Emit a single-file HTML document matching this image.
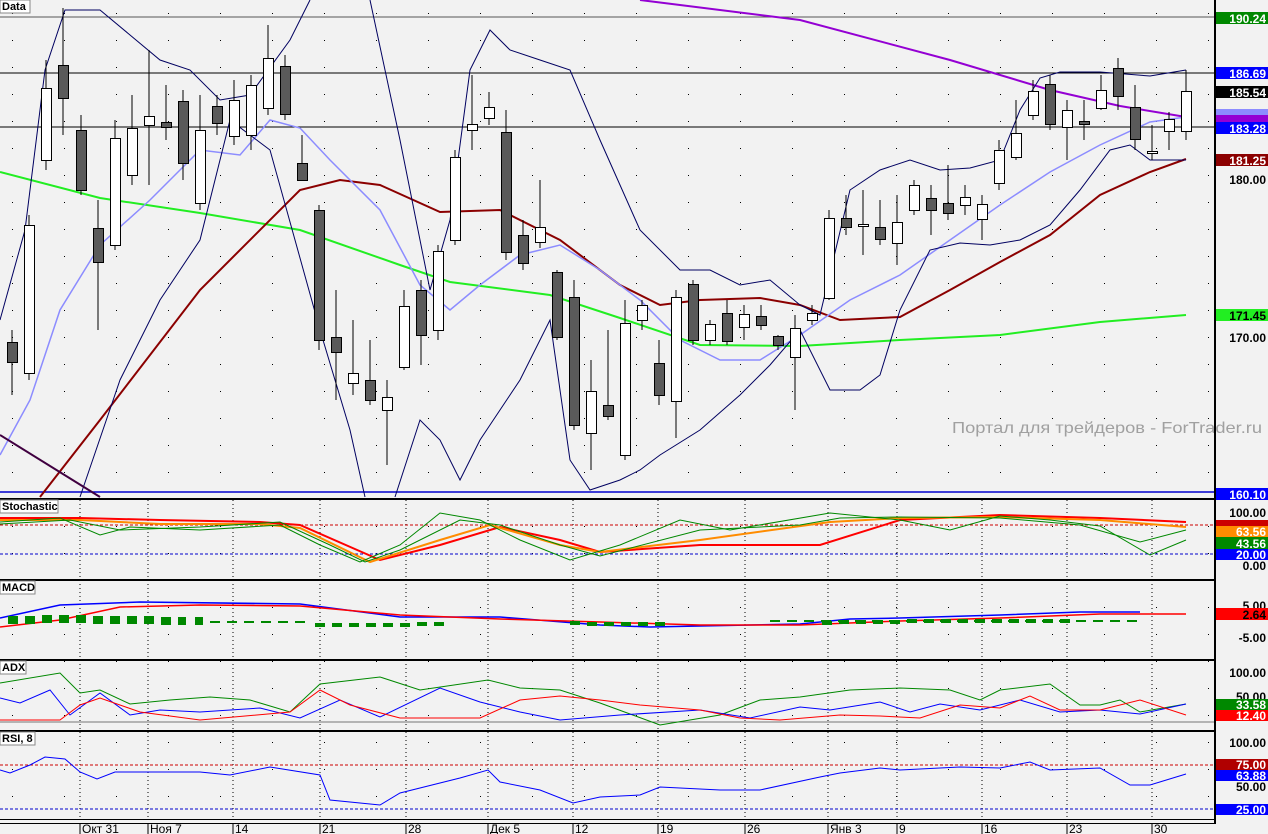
<!DOCTYPE html><html><head><meta charset="utf-8"><style>
body{margin:0;background:#f2f2f2;}
svg{display:block;font-family:"Liberation Sans",sans-serif;}
.ax{font:bold 12px "Liberation Sans",sans-serif;}
.pl{font:bold 11px "Liberation Sans",sans-serif;}
</style></head><body>
<svg width="1268" height="834" viewBox="0 0 1268 834" xmlns="http://www.w3.org/2000/svg">
<defs>
<pattern id="dots" x="12" y="0" width="52" height="27" patternUnits="userSpaceOnUse"><rect x="0" y="13" width="1" height="1" fill="#000"/></pattern>
</defs>
<rect width="1268" height="834" fill="#f2f2f2"/>
<rect x="0" y="0" width="1215" height="820" fill="url(#dots)"/>
<g stroke="#000" stroke-dasharray="1,3" stroke-width="1">
<path d="M80 500V820M148 500V820M233 500V820M320 500V820M406 500V820M488 500V820M573 500V820M658 500V820M745 500V820M828 500V820M897 500V820M982 500V820M1067 500V820M1152 500V820"/>
</g>
<path d="M0 17H1215" stroke="#555" stroke-width="1"/>
<path d="M0 73H1215M0 127H1215" stroke="#000" stroke-width="1"/>
<path d="M0 492H1215" stroke="#00c" stroke-width="1.5"/>
<g fill="none" stroke-width="2">
<polyline stroke="#22ee22" points="0,172 100,198 200,213 300,230 400,265 450,282 550,295 620,318 700,345 800,346 900,340 1000,335 1100,322 1186,315"/>
<polyline stroke="#9400d3" points="640,0 800,20 950,60 1050,90 1120,106 1186,117"/>
<polyline stroke="#8b0000" points="40,497 100,420 200,290 300,190 340,180 380,185 440,212 500,210 560,240 620,285 660,305 700,300 760,298 800,305 840,320 900,317 950,290 1000,262 1050,235 1100,195 1150,172 1186,159"/>
<polyline stroke="#8c8cff" stroke-width="1.5" points="0,455 30,400 60,310 100,245 150,200 200,150 240,155 270,120 300,128 330,160 380,210 420,285 450,310 480,285 520,255 560,245 600,270 640,300 680,340 720,360 760,360 800,335 850,300 900,275 950,240 1000,205 1050,172 1100,145 1150,122 1186,117"/>
</g>
<g fill="none" stroke="#000060" stroke-width="1">
<polyline points="0,320 25,230 45,70 65,10 100,10 130,35 160,60 190,70 220,100 250,95 290,40 310,0"/>
<polyline points="370,0 400,140 430,290 450,220 470,70 490,30 510,50 540,60 570,70 600,140 640,230 680,270 710,270 740,285 770,280 800,305 820,315 850,190 880,170 910,160 940,170 970,168 1000,160 1020,110 1040,78 1060,72 1100,72 1150,76 1186,70"/>
<polyline points="80,497 120,380 160,300 200,240 230,120 270,150 320,330 350,430 365,497"/>
<polyline points="395,497 420,420 440,440 460,480 480,440 520,380 550,320 570,460 590,490 620,480 640,470 660,455 700,430 740,395 770,365 800,330 830,390 860,390 880,375 900,310 930,250 960,243 990,245 1020,240 1050,225 1080,190 1110,150 1130,145 1150,160 1186,160"/>
</g>
<path d="M0 435L100 497" stroke="#400040" stroke-width="2"/>
<text x="952" y="433" font-size="16" fill="#a0a0a0" textLength="310" lengthAdjust="spacingAndGlyphs">Портал для трейдеров - ForTrader.ru</text>
<g fill="none" stroke-width="1">
<path d="M0 525H1215" stroke="#c00" stroke-dasharray="3,2"/>
<path d="M0 554H1215" stroke="#00c" stroke-dasharray="3,2"/>
<polyline stroke="#f00" stroke-width="2" points="0,518 80,518 160,520 260,522 300,525 380,560 440,545 500,527 560,540 600,552 700,545 820,545 900,520 1000,515 1100,518 1186,522"/>
<polyline stroke="#ff8c00" stroke-width="2" points="0,520 80,520 160,524 260,524 300,528 370,562 440,540 490,525 560,545 600,552 700,540 830,522 900,518 1000,517 1100,520 1186,527"/>
<polyline stroke="#080" points="0,522 60,518 100,535 130,527 200,530 280,525 320,545 360,562 400,545 440,513 480,520 520,540 570,560 620,545 680,520 730,530 830,513 900,520 950,530 1000,516 1050,520 1100,526 1150,555 1186,540"/>
<polyline stroke="#080" points="0,524 70,520 120,530 200,527 280,522 330,545 365,562 400,550 460,520 500,525 560,545 600,556 700,530 800,525 840,518 900,517 1000,518 1080,525 1140,542 1186,530"/>
<polyline stroke="#00f" stroke-width="1.5" points="0,618 60,605 140,602 300,604 400,617 500,617 600,625 650,627 700,626 800,624 850,619 900,618 1000,615 1080,612 1140,612"/>
<polyline stroke="#f00" stroke-width="1.5" points="0,627 60,620 120,607 200,605 300,606 400,615 500,619 600,622 700,625 800,625 900,621 1000,618 1100,614 1186,614"/>
<path d="M8 620h10M25 620h10M42 619h10M59 619h10M76 619h10M93 620h10M110 620h10M127 620h10M144 620h10M161 621h10M178 621h8M195 621h8" stroke="#080" stroke-width="8"/>
<path d="M210 622H310M770 621H1140" stroke="#080" stroke-width="2" stroke-dasharray="10,7"/>
<path d="M315 625h10M332 625h10M349 625h10M366 625h10M383 625h10M400 625h10M417 624h10M434 624h10M570 623h10M587 624h10M604 624h10M621 624h10M638 624h10M655 624h10M822 623h10M839 622h10M856 622h10M873 622h10M890 622h10M907 621h10M924 621h10M941 621h10M958 621h10M975 621h10M992 621h10M1009 621h10M1026 621h10M1043 621h10M1060 621h10" stroke="#080" stroke-width="4"/>
<path d="M0 722H1215" stroke="#777"/>
<polyline stroke="#080" points="0,683 60,673 80,693 100,690 130,704 170,700 210,697 250,700 290,712 320,684 380,677 420,690 488,680 520,688 560,690 600,703 660,725 720,715 760,700 800,697 850,690 900,688 950,690 980,700 1000,690 1050,684 1080,705 1100,705 1120,700 1140,712 1186,704"/>
<polyline stroke="#00f" points="0,698 20,703 50,690 70,715 100,693 130,715 160,710 200,712 260,708 300,718 340,700 380,717 440,688 480,702 520,712 560,720 620,715 700,710 750,718 800,707 830,710 880,702 910,712 940,704 980,710 1020,700 1060,712 1100,710 1140,714 1186,704"/>
<polyline stroke="#f00" points="0,720 60,720 80,705 100,698 140,712 200,720 290,712 320,690 350,705 400,718 480,718 520,700 560,696 600,700 640,705 700,710 740,718 780,720 840,715 880,716 920,718 960,705 1000,708 1030,696 1060,710 1100,710 1140,700 1186,715"/>
<path d="M0 765H1215" stroke="#c00" stroke-dasharray="3,2"/>
<path d="M0 809H1215" stroke="#00c" stroke-dasharray="3,2"/>
<polyline stroke="#00f" points="0,770 10,773 30,765 45,757 65,759 80,772 97,779 115,772 200,772 230,775 270,767 320,775 330,800 380,805 400,793 460,778 488,770 500,782 540,790 573,803 600,797 640,795 660,787 720,790 760,790 820,777 840,773 880,768 900,770 960,767 1000,768 1030,762 1050,770 1100,768 1130,785 1150,785 1186,774"/>
</g>
<g fill="#000">
<rect x="0" y="498" width="1215" height="2"/>
<rect x="0" y="579" width="1215" height="2"/>
<rect x="0" y="659" width="1215" height="2"/>
<rect x="0" y="730" width="1215" height="2"/>
<rect x="0" y="819" width="1215" height="1"/>
<rect x="0" y="823" width="1215" height="1"/>
<rect x="1214" y="0" width="2" height="824"/>
</g>
<g class="pl">
<rect x="0" y="0" width="30" height="13" fill="#fff" stroke="#888"/><text x="2" y="10">Data</text>
<rect x="0" y="500" width="58" height="13" fill="#fff" stroke="#888"/><text x="2" y="510">Stochastic</text>
<rect x="0" y="581" width="35" height="13" fill="#fff" stroke="#888"/><text x="2" y="591">MACD</text>
<rect x="0" y="661" width="26" height="13" fill="#fff" stroke="#888"/><text x="2" y="671">ADX</text>
<rect x="0" y="732" width="35" height="13" fill="#fff" stroke="#888"/><text x="2" y="742">RSI, 8</text>
</g>
<g font-size="12" fill="#000">
<path d="M80 824V834M148 824V834M233 824V834M320 824V834M406 824V834M488 824V834M573 824V834M658 824V834M745 824V834M828 824V834M897 824V834M982 824V834M1067 824V834M1152 824V834" stroke="#000"/>
<text x="82" y="833">Окт 31</text><text x="150" y="833">Ноя 7</text><text x="235" y="833">14</text><text x="322" y="833">21</text><text x="408" y="833">28</text><text x="490" y="833">Дек 5</text><text x="575" y="833">12</text><text x="660" y="833">19</text><text x="747" y="833">26</text><text x="830" y="833">Янв 3</text><text x="899" y="833">9</text><text x="984" y="833">16</text><text x="1069" y="833">23</text><text x="1154" y="833">30</text>
</g>
<g class="ax" text-anchor="end">
<rect x="1216" y="12" width="52" height="12" fill="#080"/><text x="1266" y="23" fill="#fff">190.24</text>
<rect x="1216" y="67" width="52" height="12" fill="#00f"/><text x="1266" y="78" fill="#fff">186.69</text>
<rect x="1216" y="86" width="52" height="12" fill="#000"/><text x="1266" y="97" fill="#fff">185.54</text>
<rect x="1216" y="109" width="52" height="6" fill="#8c8cff"/>
<rect x="1216" y="115" width="52" height="7" fill="#9400d3"/>
<rect x="1216" y="122" width="52" height="12" fill="#00f"/><text x="1266" y="133" fill="#fff">183.28</text>
<rect x="1216" y="154" width="52" height="12" fill="#8b0000"/><text x="1266" y="165" fill="#fff">181.25</text>
<text x="1266" y="184">180.00</text>
<rect x="1216" y="309" width="52" height="12" fill="#22ee22"/><text x="1266" y="320" fill="#000">171.45</text>
<text x="1266" y="342">170.00</text>
<rect x="1216" y="488" width="52" height="12" fill="#00f"/><text x="1266" y="499" fill="#fff">160.10</text>
<text x="1266" y="517">100.00</text>
<rect x="1216" y="520" width="52" height="6" fill="#c00"/>
<rect x="1216" y="526" width="52" height="11" fill="#ff8c00"/><text x="1266" y="536" fill="#fff">63.56</text>
<rect x="1216" y="537" width="52" height="12" fill="#080"/><text x="1266" y="548" fill="#fff">43.56</text>
<rect x="1216" y="549" width="52" height="11" fill="#00f"/><text x="1266" y="559" fill="#fff">20.00</text>
<text x="1266" y="570">0.00</text>
<text x="1266" y="610">5.00</text>
<rect x="1216" y="608" width="52" height="12" fill="#f00"/><text x="1266" y="619" fill="#000">2.64</text>
<text x="1266" y="642">-5.00</text>
<text x="1266" y="677">100.00</text>
<text x="1266" y="701">50.00</text>
<rect x="1216" y="699" width="52" height="11" fill="#080"/><text x="1266" y="709" fill="#fff">33.58</text>
<rect x="1216" y="710" width="52" height="11" fill="#f00"/><text x="1266" y="720" fill="#fff">12.40</text>
<text x="1266" y="747">100.00</text>
<rect x="1216" y="759" width="52" height="11" fill="#b00000"/><text x="1266" y="769" fill="#fff">75.00</text>
<rect x="1216" y="770" width="52" height="11" fill="#00f"/><text x="1266" y="780" fill="#fff">63.88</text>
<text x="1266" y="791">50.00</text>
<rect x="1216" y="804" width="52" height="11" fill="#00f"/><text x="1266" y="814" fill="#fff">25.00</text>
</g>
<g stroke="#000" stroke-width="1">
<path d="M12 330V395M29 215V380M46 60V170M63 8V135M81 115V195M98 200V330M115 120V250M132 95V185M149 50V185M166 85V140M183 90V180M200 95V210M217 95V135M234 80V145M251 75V150M268 25V115M285 55V120M302 135V180M319 205V350M336 290V400M353 320V395M370 340V405M387 380V465M404 290V370M421 280V365M438 245V340M455 150V245M472 75V150M489 92V125M506 110V260M523 220V270M540 180V248M557 270V340M574 280V430M591 360V470M608 330V420M625 300V460M642 300V330M659 340V405M676 290V438M693 280V345M710 320V345M727 300V345M744 305V340M761 305V330M778 335V350M795 315V410M812 305V325M829 210V300M846 195V235M863 190V255M880 200V245M897 195V265M914 180V215M931 185V235M948 165V220M965 185V215M982 195V240M999 140V190M1016 100V160M1033 80V120M1050 75V130M1067 100V160M1084 100V140M1101 75V110M1118 58V110M1135 85V150M1152 125V160M1169 112V150M1186 70V140"/>
<g fill="#5a5a5a">
<rect x="7.5" y="342.5" width="10" height="20"/><rect x="58.5" y="65.5" width="10" height="33"/><rect x="76.5" y="130.5" width="10" height="60"/><rect x="93.5" y="228.5" width="10" height="34"/><rect x="161.5" y="122.5" width="10" height="5"/><rect x="178.5" y="101.5" width="10" height="62"/><rect x="212.5" y="106.5" width="10" height="17"/><rect x="280.5" y="66.5" width="10" height="48"/><rect x="297.5" y="163.5" width="10" height="17"/><rect x="314.5" y="210.5" width="10" height="130"/><rect x="331.5" y="337.5" width="10" height="15"/><rect x="365.5" y="380.5" width="10" height="20"/><rect x="416.5" y="290.5" width="10" height="45"/><rect x="501.5" y="132.5" width="10" height="120"/><rect x="518.5" y="235.5" width="10" height="28"/><rect x="552.5" y="272.5" width="10" height="65"/><rect x="569.5" y="297.5" width="10" height="128"/><rect x="603.5" y="405.5" width="10" height="11"/><rect x="654.5" y="363.5" width="10" height="32"/><rect x="688.5" y="284.5" width="10" height="56"/><rect x="722.5" y="313.5" width="10" height="28"/><rect x="756.5" y="316.5" width="10" height="9"/><rect x="773.5" y="336.5" width="10" height="9"/><rect x="841.5" y="218.5" width="10" height="9"/><rect x="875.5" y="227.5" width="10" height="12"/><rect x="926.5" y="198.5" width="10" height="12"/><rect x="943.5" y="203.5" width="10" height="10"/><rect x="1045.5" y="84.5" width="10" height="40"/><rect x="1079.5" y="121.5" width="10" height="3"/><rect x="1113.5" y="68.5" width="10" height="28"/><rect x="1130.5" y="107.5" width="10" height="32"/>
</g>
<g fill="#fff">
<rect x="24.5" y="225.5" width="10" height="148"/><rect x="41.5" y="88.5" width="10" height="72"/><rect x="110.5" y="138.5" width="10" height="107"/><rect x="127.5" y="128.5" width="10" height="47"/><rect x="144.5" y="116.5" width="10" height="9"/><rect x="195.5" y="130.5" width="10" height="73"/><rect x="229.5" y="100.5" width="10" height="36"/><rect x="246.5" y="85.5" width="10" height="50"/><rect x="263.5" y="58.5" width="10" height="50"/><rect x="348.5" y="373.5" width="10" height="10"/><rect x="382.5" y="397.5" width="10" height="13"/><rect x="399.5" y="306.5" width="10" height="61"/><rect x="433.5" y="251.5" width="10" height="79"/><rect x="450.5" y="157.5" width="10" height="83"/><rect x="467.5" y="124.5" width="10" height="6"/><rect x="484.5" y="107.5" width="10" height="11"/><rect x="535.5" y="227.5" width="10" height="15"/><rect x="586.5" y="391.5" width="10" height="42"/><rect x="620.5" y="323.5" width="10" height="132"/><rect x="637.5" y="305.5" width="10" height="15"/><rect x="671.5" y="297.5" width="10" height="104"/><rect x="705.5" y="324.5" width="10" height="16"/><rect x="739.5" y="314.5" width="10" height="13"/><rect x="790.5" y="328.5" width="10" height="29"/><rect x="807.5" y="313.5" width="10" height="7"/><rect x="824.5" y="218.5" width="10" height="80"/><rect x="858.5" y="224.5" width="10" height="2"/><rect x="892.5" y="222.5" width="10" height="21"/><rect x="909.5" y="185.5" width="10" height="25"/><rect x="960.5" y="197.5" width="10" height="8"/><rect x="977.5" y="204.5" width="10" height="15"/><rect x="994.5" y="150.5" width="10" height="33"/><rect x="1011.5" y="133.5" width="10" height="24"/><rect x="1028.5" y="91.5" width="10" height="24"/><rect x="1062.5" y="110.5" width="10" height="17"/><rect x="1096.5" y="90.5" width="10" height="18"/><rect x="1147.5" y="151.5" width="10" height="2"/><rect x="1164.5" y="119.5" width="10" height="12"/><rect x="1181.5" y="91.5" width="10" height="40"/>
</g>
</g>
</svg>
</body></html>
